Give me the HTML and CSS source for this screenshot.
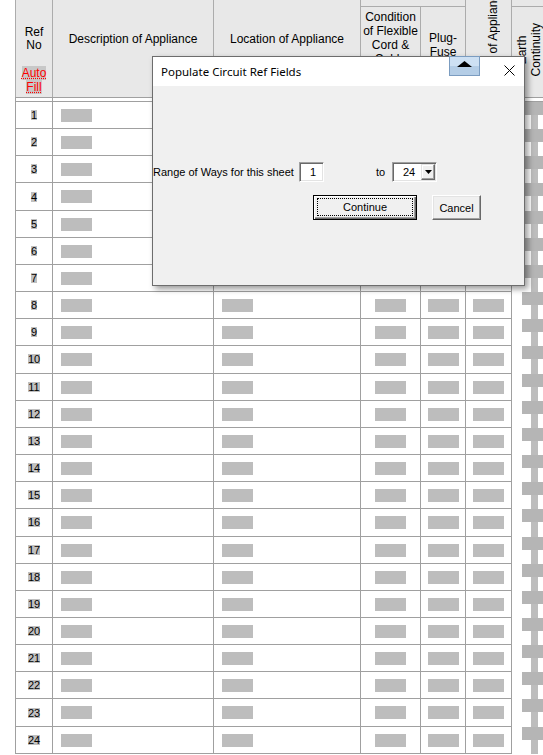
FILE: index.html
```html
<!DOCTYPE html>
<html>
<head>
<meta charset="utf-8">
<link rel="stylesheet" href="styles.css">
</head>
<body>
<div class="sheet">
  <div class="head">
    <div class="h h-ref">
      <div class="ref">Ref<br>No</div>
      <div class="auto"><span>Auto</span><br><span>Fill</span></div>
    </div>
    <div class="h h-desc">Description of Appliance</div>
    <div class="h h-desc">Location of Appliance</div>
    <div class="h grp">
      <div class="cap"></div>
      <div class="sub">
        <div class="h-cond">Condition<br>of Flexible<br>Cord &amp;<br>Cable<br>Sheath<br>&amp; Plug</div>
        <div class="h-plug"><div>Plug-<br>Fuse<br>Rating</div></div>
      </div>
    </div>
    <div class="h h-app"><span class="vt">of Appliance</span></div>
    <div class="h h-earth">
      <div class="cap"></div>
      <div class="vwrap"><span class="vt">Earth<br>Continuity</span></div>
    </div>
  </div>
  <div class="gap"><div></div><div></div><div></div><div></div><div></div><div></div><div class="last"></div></div>
  <div class="rows">
    <div class="row"><div class="c num"><span>1</span></div><div class="c txt"><span class="ph"></span></div><div class="c txt"><span class="ph"></span></div><div class="c mid"><span class="ph"></span></div><div class="c mid"><span class="ph"></span></div><div class="c mid"><span class="ph"></span></div><div class="c ec"><span class="blk"></span><span class="strip"></span></div></div>
    <div class="row"><div class="c num"><span>2</span></div><div class="c txt"><span class="ph"></span></div><div class="c txt"><span class="ph"></span></div><div class="c mid"><span class="ph"></span></div><div class="c mid"><span class="ph"></span></div><div class="c mid"><span class="ph"></span></div><div class="c ec"><span class="blk"></span><span class="strip"></span></div></div>
    <div class="row"><div class="c num"><span>3</span></div><div class="c txt"><span class="ph"></span></div><div class="c txt"><span class="ph"></span></div><div class="c mid"><span class="ph"></span></div><div class="c mid"><span class="ph"></span></div><div class="c mid"><span class="ph"></span></div><div class="c ec"><span class="blk"></span><span class="strip"></span></div></div>
    <div class="row"><div class="c num"><span>4</span></div><div class="c txt"><span class="ph"></span></div><div class="c txt"><span class="ph"></span></div><div class="c mid"><span class="ph"></span></div><div class="c mid"><span class="ph"></span></div><div class="c mid"><span class="ph"></span></div><div class="c ec"><span class="blk"></span><span class="strip"></span></div></div>
    <div class="row"><div class="c num"><span>5</span></div><div class="c txt"><span class="ph"></span></div><div class="c txt"><span class="ph"></span></div><div class="c mid"><span class="ph"></span></div><div class="c mid"><span class="ph"></span></div><div class="c mid"><span class="ph"></span></div><div class="c ec"><span class="blk"></span><span class="strip"></span></div></div>
    <div class="row"><div class="c num"><span>6</span></div><div class="c txt"><span class="ph"></span></div><div class="c txt"><span class="ph"></span></div><div class="c mid"><span class="ph"></span></div><div class="c mid"><span class="ph"></span></div><div class="c mid"><span class="ph"></span></div><div class="c ec"><span class="blk"></span><span class="strip"></span></div></div>
    <div class="row"><div class="c num"><span>7</span></div><div class="c txt"><span class="ph"></span></div><div class="c txt"><span class="ph"></span></div><div class="c mid"><span class="ph"></span></div><div class="c mid"><span class="ph"></span></div><div class="c mid"><span class="ph"></span></div><div class="c ec"><span class="blk"></span><span class="strip"></span></div></div>
    <div class="row"><div class="c num"><span>8</span></div><div class="c txt"><span class="ph"></span></div><div class="c txt"><span class="ph"></span></div><div class="c mid"><span class="ph"></span></div><div class="c mid"><span class="ph"></span></div><div class="c mid"><span class="ph"></span></div><div class="c ec"><span class="blk"></span><span class="strip"></span></div></div>
    <div class="row"><div class="c num"><span>9</span></div><div class="c txt"><span class="ph"></span></div><div class="c txt"><span class="ph"></span></div><div class="c mid"><span class="ph"></span></div><div class="c mid"><span class="ph"></span></div><div class="c mid"><span class="ph"></span></div><div class="c ec"><span class="blk"></span><span class="strip"></span></div></div>
    <div class="row"><div class="c num"><span>10</span></div><div class="c txt"><span class="ph"></span></div><div class="c txt"><span class="ph"></span></div><div class="c mid"><span class="ph"></span></div><div class="c mid"><span class="ph"></span></div><div class="c mid"><span class="ph"></span></div><div class="c ec"><span class="blk"></span><span class="strip"></span></div></div>
    <div class="row"><div class="c num"><span>11</span></div><div class="c txt"><span class="ph"></span></div><div class="c txt"><span class="ph"></span></div><div class="c mid"><span class="ph"></span></div><div class="c mid"><span class="ph"></span></div><div class="c mid"><span class="ph"></span></div><div class="c ec"><span class="blk"></span><span class="strip"></span></div></div>
    <div class="row"><div class="c num"><span>12</span></div><div class="c txt"><span class="ph"></span></div><div class="c txt"><span class="ph"></span></div><div class="c mid"><span class="ph"></span></div><div class="c mid"><span class="ph"></span></div><div class="c mid"><span class="ph"></span></div><div class="c ec"><span class="blk"></span><span class="strip"></span></div></div>
    <div class="row"><div class="c num"><span>13</span></div><div class="c txt"><span class="ph"></span></div><div class="c txt"><span class="ph"></span></div><div class="c mid"><span class="ph"></span></div><div class="c mid"><span class="ph"></span></div><div class="c mid"><span class="ph"></span></div><div class="c ec"><span class="blk"></span><span class="strip"></span></div></div>
    <div class="row"><div class="c num"><span>14</span></div><div class="c txt"><span class="ph"></span></div><div class="c txt"><span class="ph"></span></div><div class="c mid"><span class="ph"></span></div><div class="c mid"><span class="ph"></span></div><div class="c mid"><span class="ph"></span></div><div class="c ec"><span class="blk"></span><span class="strip"></span></div></div>
    <div class="row"><div class="c num"><span>15</span></div><div class="c txt"><span class="ph"></span></div><div class="c txt"><span class="ph"></span></div><div class="c mid"><span class="ph"></span></div><div class="c mid"><span class="ph"></span></div><div class="c mid"><span class="ph"></span></div><div class="c ec"><span class="blk"></span><span class="strip"></span></div></div>
    <div class="row"><div class="c num"><span>16</span></div><div class="c txt"><span class="ph"></span></div><div class="c txt"><span class="ph"></span></div><div class="c mid"><span class="ph"></span></div><div class="c mid"><span class="ph"></span></div><div class="c mid"><span class="ph"></span></div><div class="c ec"><span class="blk"></span><span class="strip"></span></div></div>
    <div class="row"><div class="c num"><span>17</span></div><div class="c txt"><span class="ph"></span></div><div class="c txt"><span class="ph"></span></div><div class="c mid"><span class="ph"></span></div><div class="c mid"><span class="ph"></span></div><div class="c mid"><span class="ph"></span></div><div class="c ec"><span class="blk"></span><span class="strip"></span></div></div>
    <div class="row"><div class="c num"><span>18</span></div><div class="c txt"><span class="ph"></span></div><div class="c txt"><span class="ph"></span></div><div class="c mid"><span class="ph"></span></div><div class="c mid"><span class="ph"></span></div><div class="c mid"><span class="ph"></span></div><div class="c ec"><span class="blk"></span><span class="strip"></span></div></div>
    <div class="row"><div class="c num"><span>19</span></div><div class="c txt"><span class="ph"></span></div><div class="c txt"><span class="ph"></span></div><div class="c mid"><span class="ph"></span></div><div class="c mid"><span class="ph"></span></div><div class="c mid"><span class="ph"></span></div><div class="c ec"><span class="blk"></span><span class="strip"></span></div></div>
    <div class="row"><div class="c num"><span>20</span></div><div class="c txt"><span class="ph"></span></div><div class="c txt"><span class="ph"></span></div><div class="c mid"><span class="ph"></span></div><div class="c mid"><span class="ph"></span></div><div class="c mid"><span class="ph"></span></div><div class="c ec"><span class="blk"></span><span class="strip"></span></div></div>
    <div class="row"><div class="c num"><span>21</span></div><div class="c txt"><span class="ph"></span></div><div class="c txt"><span class="ph"></span></div><div class="c mid"><span class="ph"></span></div><div class="c mid"><span class="ph"></span></div><div class="c mid"><span class="ph"></span></div><div class="c ec"><span class="blk"></span><span class="strip"></span></div></div>
    <div class="row"><div class="c num"><span>22</span></div><div class="c txt"><span class="ph"></span></div><div class="c txt"><span class="ph"></span></div><div class="c mid"><span class="ph"></span></div><div class="c mid"><span class="ph"></span></div><div class="c mid"><span class="ph"></span></div><div class="c ec"><span class="blk"></span><span class="strip"></span></div></div>
    <div class="row"><div class="c num"><span>23</span></div><div class="c txt"><span class="ph"></span></div><div class="c txt"><span class="ph"></span></div><div class="c mid"><span class="ph"></span></div><div class="c mid"><span class="ph"></span></div><div class="c mid"><span class="ph"></span></div><div class="c ec"><span class="blk"></span><span class="strip"></span></div></div>
    <div class="row"><div class="c num"><span>24</span></div><div class="c txt"><span class="ph"></span></div><div class="c txt"><span class="ph"></span></div><div class="c mid"><span class="ph"></span></div><div class="c mid"><span class="ph"></span></div><div class="c mid"><span class="ph"></span></div><div class="c ec"><span class="blk"></span><span class="strip"></span></div></div>
  </div>
</div>

<div class="dlg">
  <div class="tbar">
    <span class="ttl">Populate Circuit Ref Fields</span>
    <span class="upbtn"><svg width="15" height="6" viewBox="0 0 15 6"><polygon points="0,6 7.5,0 15,6" fill="#000"/></svg></span>
    <span class="close"><svg width="11" height="11" viewBox="0 0 11 11"><path d="M0.5 0.5 L10.5 10.5 M10.5 0.5 L0.5 10.5" stroke="#000" stroke-width="1" fill="none"/></svg></span>
  </div>
  <div class="dbody">
    <div class="frow">
      <span class="lbl">Range of Ways for this sheet</span>
      <span class="tb">1</span>
      <span class="to">to</span>
      <span class="cb"><span class="cbv">24</span><span class="cbb"><svg width="7" height="4" viewBox="0 0 7 4"><polygon points="0,0 7,0 3.5,4" fill="#000"/></svg></span></span>
    </div>
    <div class="brow">
      <span class="btn def"><span class="focus">Continue</span></span>
      <span class="btn can">Cancel</span>
    </div>
  </div>
</div>
</body>
</html>
```

FILE: styles.css
```css
* { box-sizing: border-box; }
html, body { margin: 0; padding: 0; }
body {
  width: 543px;
  height: 755px;
  overflow: hidden;
  position: relative;
  background: #fff;
  font-family: "Liberation Sans", Arial, sans-serif;
  color: #000;
}
.sheet { margin-left: 15px; width: 530px; }

/* header */
.head {
  display: grid;
  grid-template-columns: 37px 161px 147px 105px 46px 34px;
  height: 98px;
  background: #e8e8e8;
  border-bottom: 1px solid #a0a0a0;
}
.h {
  border-left: 1px solid #acacac;
  overflow: hidden;
  font-size: 12px;
  line-height: 14px;
  text-align: center;
}
.h-ref { padding-top: 26px; }
.ref { line-height: 13px; }
.auto { margin-top: 14px; color: #ff0000; }
.auto span {
  background: #c8c8c8;
  text-decoration: underline dotted #ff0000;
}
.h-desc { padding-top: 32px; }
.grp { display: flex; flex-direction: column; }
.cap { height: 7px; flex: none; border-bottom: 1px solid #acacac; }
.sub { flex: 1; display: grid; grid-template-columns: 59px 45px; }
.h-cond { padding-top: 3px; }
.h-plug {
  border-left: 1px solid #acacac;
  display: flex;
  align-items: center;
  justify-content: center;
}
.h-app {
  display: flex;
  flex-direction: column;
  justify-content: flex-end;
  align-items: center;
  padding-bottom: 44px;
  padding-left: 8px;
}
.vt {
  writing-mode: vertical-rl;
  transform: rotate(180deg);
  white-space: nowrap;
  line-height: 14px;
  text-align: center;
  flex: none;
}
.h-earth { display: flex; flex-direction: column; }
.vwrap {
  flex: 1;
  display: flex;
  align-items: center;
  justify-content: center;
  padding-bottom: 4px;
}

/* gap between header and rows */
.gap {
  display: grid;
  grid-template-columns: 37px 161px 147px 60px 45px 46px 34px;
  height: 4px;
}
.gap div { border-left: 1px solid #a0a0a0; border-bottom: 1px solid #a0a0a0; }

/* rows */
.row {
  display: grid;
  grid-template-columns: 37px 161px 147px 60px 45px 46px 34px;
  height: 27.17px;
}
.c { border-left: 1px solid #a0a0a0; border-bottom: 1px solid #a0a0a0; }
.num {
  display: flex;
  align-items: center;
  justify-content: center;
  font-size: 11px;
}
.num span {
  display: inline-block;
  height: 10px;
  line-height: 10px;
  background: #c0c0c0;
}
.txt { padding: 7px 0 0 8px; }
.mid { padding-top: 7px; display: flex; justify-content: center; align-items: flex-start; }
.ph { display: block; width: 31px; height: 13px; background: #bdbdbd; }
.ec { display: flex; flex-direction: column; border-bottom: none; }
.blk { display: block; margin-left: 10px; width: 24px; height: 13px; background: #b5b5b5; flex: none; }
.strip { display: block; margin-left: 19px; width: 7px; flex: 1; background: #bdbdbd; }

/* dialog */
.dlg {
  position: absolute;
  left: 152px;
  top: 56px;
  width: 373px;
  height: 230px;
  border: 1px solid #6d6d6d;
  background: #f0f0f0;
  box-shadow: 3px 3px 6px rgba(0, 0, 0, 0.4);
  font-size: 11px;
  z-index: 2;
}
.tbar {
  height: 29px;
  background: #fff;
  display: flex;
  align-items: center;
}
.ttl {
  flex: 1;
  padding-left: 8px;
  font-family: "Noto Sans", sans-serif;
  font-size: 11.5px;
  color: #000;
}
.upbtn {
  align-self: flex-start;
  margin-top: -1px;
  margin-right: 15px;
  width: 31px;
  height: 20px;
  border: 1px solid #7b9cc0;
  background: linear-gradient(#cde0f3 50%, #b4cde6 50%);
  display: flex;
  justify-content: center;
  padding-top: 4px;
}
.upbtn svg { display: block; }
.close {
  width: 29px;
  height: 29px;
  display: flex;
  align-items: center;
  justify-content: center;
  padding-bottom: 2px;
}
.close svg { display: block; }
.dbody { padding-top: 76px; }
.frow { display: flex; align-items: center; height: 20px; }
.lbl { width: 146px; white-space: nowrap; }
.tb, .cb {
  height: 20px;
  background: #fff;
  border: 1px solid;
  border-color: #a0a0a0 #fff #fff #a0a0a0;
  box-shadow: inset 1px 1px #696969, inset -1px -1px #e3e3e3;
}
.tb { width: 25px; padding-left: 10px; line-height: 18px; }
.to { width: 16px; margin-left: 52px; }
.cb {
  width: 45px;
  display: flex;
  align-items: center;
  padding: 0 1px 0 10px;
}
.cbb {
  margin-left: auto;
  width: 14px;
  height: 16px;
  background: #f0f0f0;
  border: 1px solid;
  border-color: #e3e3e3 #696969 #696969 #e3e3e3;
  box-shadow: inset -1px -1px #a0a0a0, inset 1px 1px #fff;
  display: flex;
  align-items: center;
  justify-content: center;
}
.cbb svg { display: block; }
.brow { display: flex; margin-top: 13px; padding-left: 160px; }
.btn {
  height: 25px;
  display: flex;
  align-items: center;
  justify-content: center;
  background: #f0f0f0;
}
.def {
  width: 104px;
  border: 1px solid #000;
  box-shadow: inset 1px 1px #fff, inset -1px -1px #696969, inset -2px -2px #a0a0a0;
  padding: 2px 3px 3px 3px;
  align-items: stretch;
}
.focus {
  flex: 1;
  border: 1px dotted #000;
  display: flex;
  align-items: center;
  justify-content: center;
}
.can {
  width: 49px;
  margin-left: 15px;
  border: 1px solid;
  border-color: #fff #696969 #696969 #fff;
  box-shadow: inset -1px -1px #a0a0a0, inset 1px 1px #e3e3e3;
}
```
